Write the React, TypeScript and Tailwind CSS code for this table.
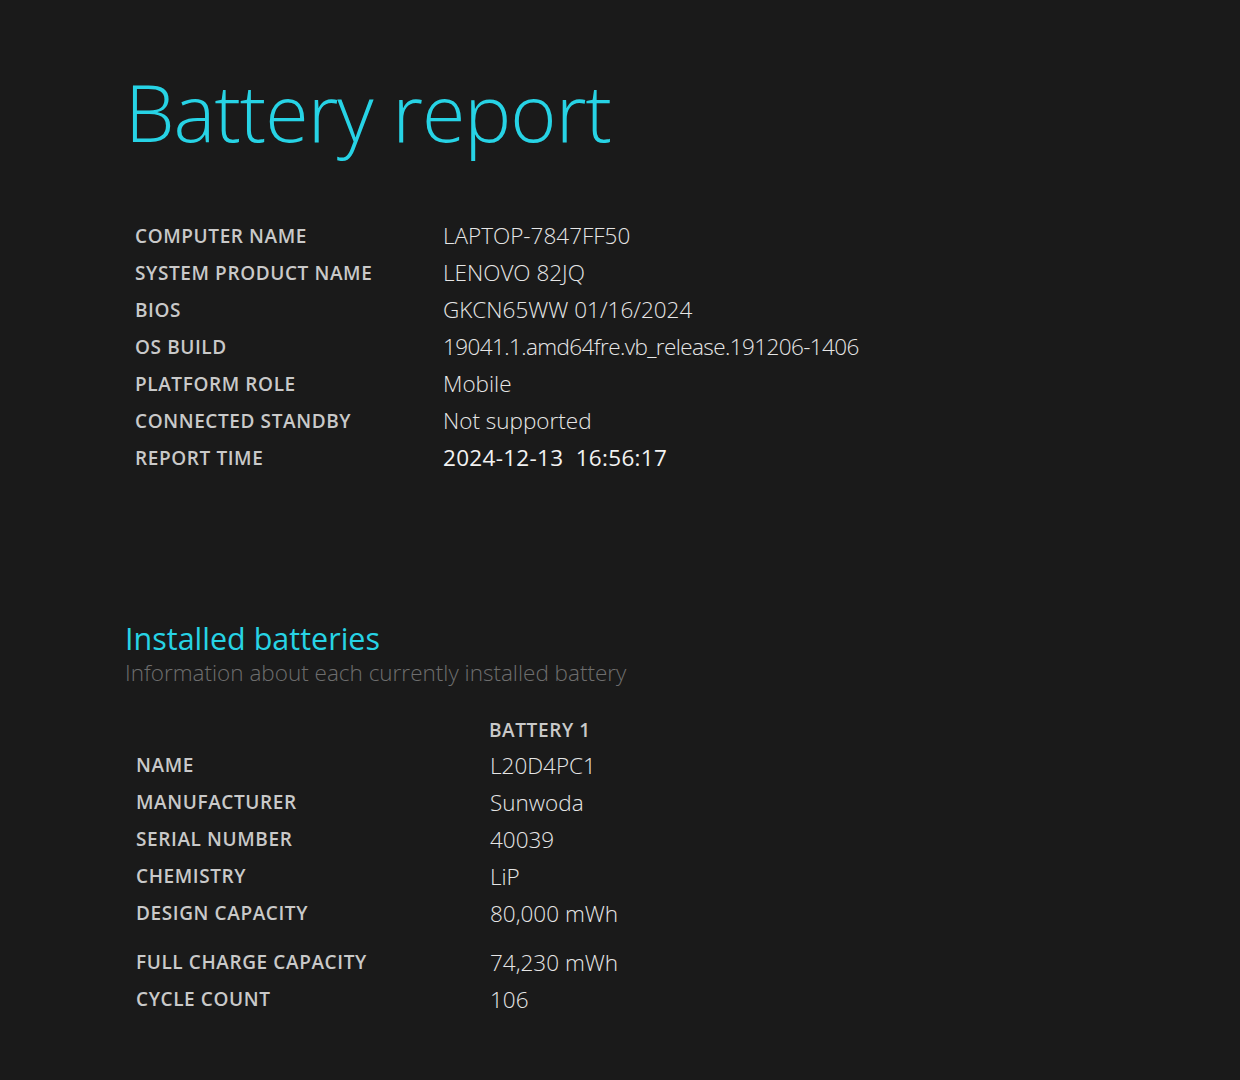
import React from "react";

const info: [string, string, string?][] = [
  ["COMPUTER NAME", "LAPTOP-7847FF50"],
  ["SYSTEM PRODUCT NAME", "LENOVO 82JQ"],
  ["BIOS", "GKCN65WW 01/16/2024"],
  ["OS BUILD", "19041.1.amd64fre.vb_release.191206-1406", "tracking-[-0.6px]"],
  ["PLATFORM ROLE", "Mobile"],
  ["CONNECTED STANDBY", "Not supported"],
];

const bat: [string, string, boolean?][] = [
  ["NAME", "L20D4PC1"],
  ["MANUFACTURER", "Sunwoda"],
  ["SERIAL NUMBER", "40039"],
  ["CHEMISTRY", "LiP"],
  ["DESIGN CAPACITY", "80,000 mWh"],
  ["FULL CHARGE CAPACITY", "74,230 mWh", true],
  ["CYCLE COUNT", "106"],
];

export default function App() {
  return (
    <div
      className="min-h-[1080px] w-full bg-[#1a1a1a] text-[#e0e0e0]"
      style={{ fontFamily: '"Open Sans", "Noto Sans", sans-serif' }}
    >
      <div className="pl-[125px] pt-[62px]">
        <h1 className="text-[79px] font-light leading-[100px] text-[#27d3e5] tracking-[-1px]">
          Battery report
        </h1>

        <div className="mt-[55px] pl-[10px]">
          {info.map(([k, v, cls]) => (
            <div key={k} className="flex h-[37px] items-center">
              <div className="w-[308px] pt-[1px] text-[19px] font-semibold tracking-[0.6px] text-[#c9c9c9]">{k}</div>
              <div className={`text-[22.5px] font-light text-[#e6e6e6] ${cls ?? ""}`}>{v}</div>
            </div>
          ))}
          <div className="flex h-[37px] items-center">
            <div className="w-[308px] pt-[1px] text-[19px] font-semibold tracking-[0.6px] text-[#c9c9c9]">REPORT TIME</div>
            <div className="text-[22.5px] font-normal tracking-[0.3px] text-[#f2f2f2]">
              2024-12-13&nbsp;&nbsp;16:56:17
            </div>
          </div>
        </div>

        <div className="mt-[143px]">
          <h2 className="text-[30.5px] font-normal leading-[38px] text-[#27d3e5]">Installed batteries</h2>
          <div className="text-[22.5px] font-light leading-[32px] text-[#6e6e6e]">
            Information about each currently installed battery
          </div>
        </div>

        <div className="mt-[24px] pl-[11px]">
          <div className="flex h-[34px] items-center">
            <div className="w-[353px]" />
            <div className="text-[19px] font-semibold tracking-[0.6px] text-[#c9c9c9]">BATTERY 1</div>
          </div>
          {bat.map(([k, v, gap]) => (
            <div key={k} className={`flex h-[37px] items-center ${gap ? "mt-[12px]" : ""}`}>
              <div className="w-[354px] text-[19px] font-semibold tracking-[0.6px] text-[#c9c9c9]">{k}</div>
              <div className="text-[22.5px] font-light text-[#e6e6e6]">{v}</div>
            </div>
          ))}
        </div>
      </div>
    </div>
  );
}
